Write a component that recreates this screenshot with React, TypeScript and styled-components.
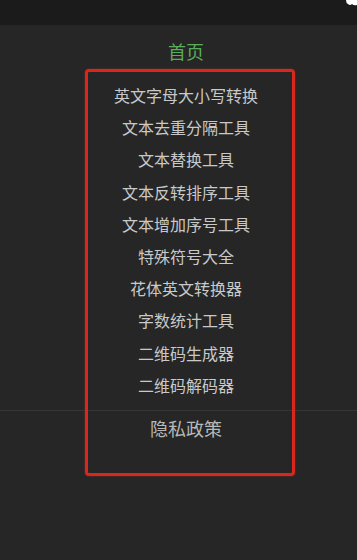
import React from "react";
import styled, { createGlobalStyle } from "styled-components";

const Global = createGlobalStyle`
  html, body { margin: 0; padding: 0; background: #262626; }
  body { font-family: "Noto Sans CJK SC", "Noto Sans", sans-serif; }
`;

const Page = styled.div`
  position: relative;
  width: 357px;
  height: 560px;
  background: #262626;
  overflow: hidden;
`;

const TopBar = styled.div`
  position: relative;
  height: 25px;
  background: #1b1b1b;
`;

const Corner = styled.svg`
  position: absolute;
  right: 0;
  top: 0;
`;

const Nav = styled.nav`
  display: flex;
  flex-direction: column;
  align-items: center;
  padding-top: 10px;
  padding-left: 15px;
`;

const Home = styled.a`
  display: block;
  height: 32px;
  line-height: 32px;
  font-size: 18px;
  color: #5aae5a;
  margin-bottom: 12px;
`;

const Item = styled.a`
  display: block;
  height: 32.2px;
  line-height: 32.2px;
  font-size: 16px;
  color: #c9c9c9;
  text-align: center;
`;

const Divider = styled.div`
  align-self: stretch;
  height: 1px;
  background: #363636;
  margin-top: 9px;
  margin-left: -15px;
`;

const Privacy = styled.a`
  display: block;
  height: 34px;
  line-height: 34px;
  font-size: 18px;
  color: #b8b8b8;
`;

const Highlight = styled.div`
  position: absolute;
  left: 85px;
  top: 69px;
  width: 204px;
  height: 401px;
  border: 3px solid #d8281d;
  border-radius: 4px;
  box-shadow: 0 0 2px rgba(216, 40, 29, 0.6);
  pointer-events: none;
`;

const items = [
  "英文字母大小写转换",
  "文本去重分隔工具",
  "文本替换工具",
  "文本反转排序工具",
  "文本增加序号工具",
  "特殊符号大全",
  "花体英文转换器",
  "字数统计工具",
  "二维码生成器",
  "二维码解码器",
];

export default function App() {
  return (
    <>
      <Global />
      <Page>
        <TopBar>
          <Corner width="12" height="6" viewBox="0 0 12 6">
            <path d="M1 0 L12 0 L12 5 Q9 6 7 4 Q5 6 3 4 Q1 3 1 0 Z" fill="#ffffff" />
          </Corner>
        </TopBar>
        <Nav>
          <Home>首页</Home>
          {items.map((t) => (
            <Item key={t}>{t}</Item>
          ))}
          <Divider />
          <Privacy>隐私政策</Privacy>
        </Nav>
        <Highlight />
      </Page>
    </>
  );
}
